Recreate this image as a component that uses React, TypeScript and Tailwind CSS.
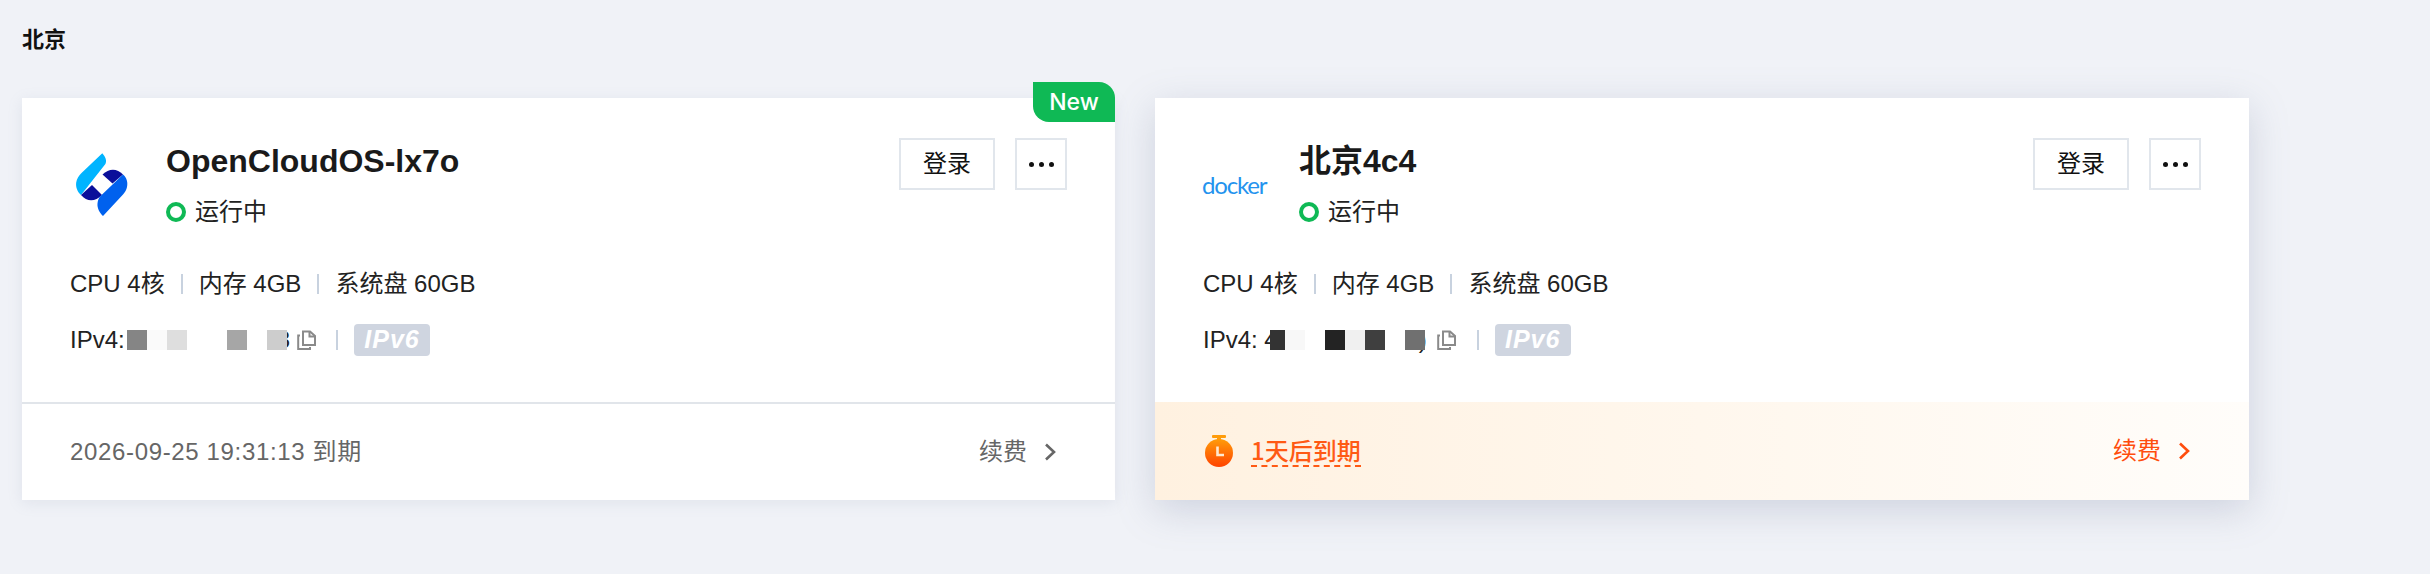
import React from "react";

const Logo = () => (
  <svg width="90" height="90" viewBox="10 0 90 90">
    <path d="M42.3 13.3C45.6 17 47 21 45.4 24L21 55C17.5 52 15.5 47 16.2 42.5C16.8 38.5 19 35.5 21.5 33Z" fill="#00b4ff" />
    <path d="M42.5 34.5C49 28 57 28 63 34.5L52.5 43.5Z" fill="#0a0f9a" />
    <path d="M21 55L32 45L42 55C35 62 27 62 21 55Z" fill="#0a0f9a" />
    <path d="M63 34.5C67 37.5 68 43 67 47C66.5 50 65 52 63 54.5L43 76C39.5 72.5 37 68 37.5 63.5C37.8 60.5 38.5 58.5 40 56.5Z" fill="#0061ee" />
  </svg>
);

const Timer = () => (
  <svg width="28" height="32" viewBox="0 0 28 32" className="shrink-0">
    <defs>
      <linearGradient id="timerFill" x1="0" y1="0" x2="0" y2="1">
        <stop offset="0" stopColor="#ff9c0a" />
        <stop offset="1" stopColor="#ff4300" />
      </linearGradient>
    </defs>
    <rect x="7" y="0" width="14" height="3" rx="1" fill="#ff9c0a" />
    <rect x="12" y="2" width="4" height="4" fill="#ff9c0a" />
    <circle cx="14" cy="18" r="14" fill="url(#timerFill)" />
    <path d="M12.5 11.5V20H19" fill="none" stroke="#ffe9d0" strokeWidth="2.6" />
  </svg>
);

const CopyIcon = () => (
  <svg width="20" height="20" viewBox="0 0 20 20" className="shrink-0" fill="none" stroke="#8a8a8a" strokeWidth="2">
    <path d="M6 1.5H13L18 6V15H6Z" />
    <path d="M12.5 1.5V6.5H18" />
    <path d="M3 5.5H1.2V19H13V17" />
  </svg>
);

const Chevron = ({ color }: { color: string }) => (
  <svg width="12" height="18" viewBox="0 0 12 18" fill="none" stroke={color} strokeWidth="2.6">
    <path d="M2 1.5L10 9L2 16.5" />
  </svg>
);

const Sep = () => <span className="mx-[16px] h-[20px] w-[2px] shrink-0 bg-[#c8d2df]"></span>;

const Mosaic = ({ cells, shift }: { cells: { w: number; c: string }[]; shift: number }) => (
  <div className="relative z-10 flex h-[20px]" style={{ marginLeft: shift }}>
    {cells.map((cell, i) => (
      <span key={i} className="block h-[20px]" style={{ width: cell.w, background: cell.c }}></span>
    ))}
  </div>
);

const InstanceCard = ({ name, logo, isNew, mosaic, shift, tail, tailShift, prefix, warn, width, copyGap, sepGap }: any) => {
  return (
    <div
      className={
        width +
        " relative flex h-[402px] flex-col bg-white " +
        (warn ? "shadow-[0_10px_36px_rgba(120,130,160,0.28)]" : "shadow-[0_3px_14px_rgba(130,140,170,0.14)]")
      }
    >
      {isNew && (
        <div className="absolute right-0 top-[-16px] flex h-[40px] w-[82px] items-center justify-center rounded-tr-[16px] rounded-bl-[16px] bg-[#0fb955] font-['Inter',sans-serif] text-[23px] font-medium text-white">
          New
        </div>
      )}
      <div className="flex-1 px-[48px] pt-[40px]">
        <div className="flex items-start justify-between">
          <div className="mt-[2px] flex">
            <div className="flex h-[90px] w-[96px] items-center">{logo}</div>
            <div className="flex flex-col">
              <div className="flex h-[42px] items-center text-[32px] font-bold text-[#1a1a1a]">{name}</div>
              <div className="mt-[13px] flex h-[34px] items-center text-[24px] text-[#222222]">
                <span className="mr-[9px] h-[20px] w-[20px] rounded-full border-[4px] border-[#0fb955]"></span>
                运行中
              </div>
            </div>
          </div>
          <div className="flex gap-[20px]">
            <button className="flex h-[52px] w-[96px] items-center justify-center border-2 border-[#e1e6ec] text-[24px] text-[#111111]">
              登录
            </button>
            <button className="flex h-[52px] w-[52px] items-center justify-center gap-[5px] border-2 border-[#e1e6ec]">
              <span className="h-[5px] w-[5px] rounded-full bg-[#111111]"></span>
              <span className="h-[5px] w-[5px] rounded-full bg-[#111111]"></span>
              <span className="h-[5px] w-[5px] rounded-full bg-[#111111]"></span>
            </button>
          </div>
        </div>
        <div className="mt-[37px] flex h-[34px] items-center text-[24px] text-[#222222]">
          <span className="whitespace-pre">CPU 4核</span>
          <Sep />
          <span className="whitespace-pre">内存 4GB</span>
          <Sep />
          <span className="whitespace-pre">系统盘 60GB</span>
        </div>
        <div className="mt-[23px] flex h-[32px] items-center text-[24px] text-[#222222]">
          <span className="whitespace-pre">{prefix}</span>
          <Mosaic cells={mosaic} shift={shift} />
          <span style={{ marginLeft: tailShift }}>{tail}</span>
          <span style={{ marginLeft: copyGap }} className="flex">
            <CopyIcon />
          </span>
          <span style={{ marginLeft: sepGap }} className="h-[20px] w-[2px] bg-[#c8d2df]"></span>
          <span className="ml-[16px] flex h-[32px] w-[76px] items-center justify-center rounded-[4px] bg-[#cfd5e0] text-[25px] font-bold italic tracking-[1px] text-white">
            IPv6
          </span>
        </div>
      </div>
      {warn ? (
        <div className="flex h-[98px] items-center justify-between bg-gradient-to-r from-[#fff1e0] to-[#fffdfa] pl-[50px] pr-[59px]">
          <div className="flex items-center">
            <Timer />
            <span className="ml-[18px] mb-[1px] border-b-2 border-dashed border-[#ff5a14] font-['Noto_Sans_CJK_SC',sans-serif] text-[24px] font-medium leading-[30px] text-[#ff5a14]">
              1天后到期
            </span>
          </div>
          <div className="flex items-center gap-[17px] text-[24px] text-[#ff4d0d]">
            续费
            <Chevron color="#ff4d0d" />
          </div>
        </div>
      ) : (
        <div className="flex h-[98px] items-center justify-between border-t-2 border-[#e1e5ea] pl-[48px] pr-[59px]">
          <span className="text-[24px] tracking-[0.65px] text-[#666666]">2026-09-25 19:31:13 到期</span>
          <div className="flex items-center gap-[17px] text-[24px] text-[#666666]">
            续费
            <Chevron color="#666666" />
          </div>
        </div>
      )}
    </div>
  );
};

export default function App() {
  return (
    <div className="h-[574px] w-full overflow-hidden bg-[#f0f2f7] px-[22px] font-['Liberation_Sans','Noto_Sans_CJK_SC',sans-serif]">
      <div className="flex h-[98px] items-start pt-[26px] text-[22px] font-bold leading-[28px] text-[#111111]">北京</div>
      <div className="flex gap-[40px]">
        <InstanceCard
          width="w-[1093px]"
          name="OpenCloudOS-lx7o"
          isNew
          logo={<Logo />}
          prefix="IPv4:"
          tail="3"
          tailShift={-10}
          shift={2}
          copyGap={7}
          sepGap={19}
          mosaic={[
            { w: 20, c: "#858585" },
            { w: 20, c: "#fafafa" },
            { w: 20, c: "#dedede" },
            { w: 40, c: "#ffffff" },
            { w: 20, c: "#a6a6a6" },
            { w: 20, c: "#ffffff" },
            { w: 20, c: "#cdcdcd" },
          ]}
        />
        <InstanceCard
          width="w-[1094px]"
          name="北京4c4"
          warn
          logo={<span className="-ml-[1px] font-['Lato',sans-serif] text-[24px] leading-none tracking-[-1.2px] text-[#2493ee]">docker</span>}
          prefix="IPv4: 4"
          tail=")"
          tailShift={-6}
          shift={-8}
          copyGap={10}
          sepGap={20}
          mosaic={[
            { w: 15, c: "#333333" },
            { w: 20, c: "#f8f8f8" },
            { w: 20, c: "#ffffff" },
            { w: 20, c: "#232323" },
            { w: 20, c: "#f0f0f0" },
            { w: 20, c: "#3f3f3f" },
            { w: 20, c: "#ffffff" },
            { w: 20, c: "#707070" },
          ]}
        />
      </div>
    </div>
  );
}
